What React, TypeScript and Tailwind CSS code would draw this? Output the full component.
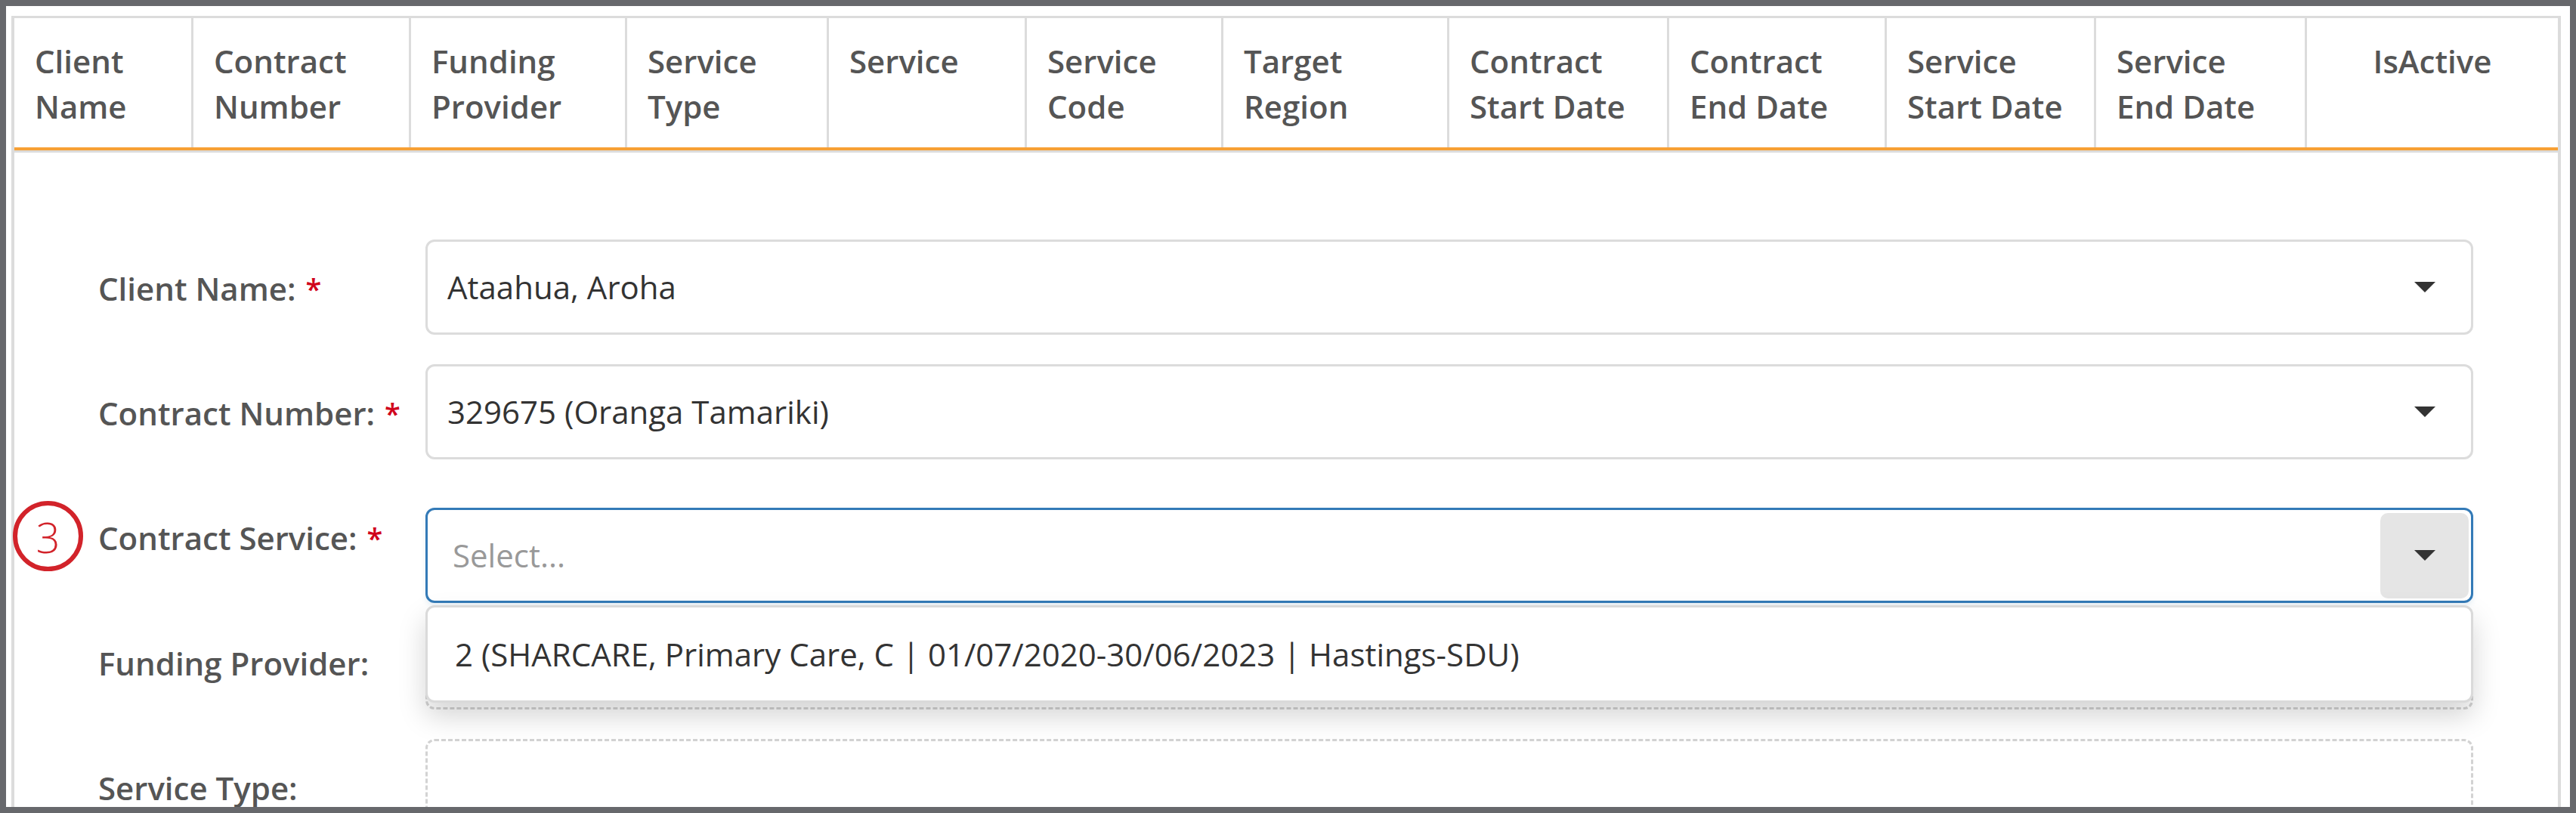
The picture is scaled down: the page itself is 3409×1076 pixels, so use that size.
const columns = [
  { label: ["Client", "Name"], width: "w-[237px]" },
  { label: ["Contract", "Number"], width: "w-[288px]" },
  { label: ["Funding", "Provider"], width: "w-[286px]" },
  { label: ["Service", "Type"], width: "w-[267px]" },
  { label: ["Service"], width: "w-[262px]" },
  { label: ["Service", "Code"], width: "w-[260px]" },
  { label: ["Target", "Region"], width: "w-[299px]" },
  { label: ["Contract", "Start Date"], width: "w-[291px]" },
  { label: ["Contract", "End Date"], width: "w-[288px]" },
  { label: ["Service", "Start Date"], width: "w-[277px]" },
  { label: ["Service", "End Date"], width: "w-[279px]" },
];

function Caret() {
  return (
    <span className="block w-0 h-0 border-l-[14px] border-r-[14px] border-t-[14px] border-l-transparent border-r-transparent border-t-[#333]" />
  );
}

function Label({ text, required }: { text: string; required?: boolean }) {
  return (
    <div className="w-[544px] shrink-0 pl-[111px] font-semibold text-[#555] whitespace-nowrap">
      {text}
      {required && <span className="text-[#d0021b] ml-[13px] text-[38px] align-top">*</span>}
    </div>
  );
}

function SelectBox({ value }: { value: string }) {
  return (
    <div className="w-[2710px] h-[126px] border-[3px] border-[#dcdcdc] rounded-[12px] flex items-center justify-between pl-[26px] pr-[3px]">
      <span className="text-[#333]">{value}</span>
      <div className="w-[117px] h-[113px] flex items-center justify-center">
        <Caret />
      </div>
    </div>
  );
}

export default function App() {
  return (
    <div className="w-[3409px] h-[1076px] bg-[#67686c] p-[8px] overflow-hidden font-['Open_Sans',sans-serif] text-[42px] leading-[60px]">
      <div className="h-full bg-white pt-[13px] pl-[7px] pr-[12px] overflow-hidden">
        <div className="h-full border-x-4 border-t-[3px] border-[#dcdcdc]">
          {/* table header */}
          <div className="flex border-b-4 border-[#f7a035]">
            {columns.map((col) => (
              <div
                key={col.label.join(" ")}
                className={`${col.width} shrink-0 border-r-[3px] border-[#dcdcdc] pl-[27px] pt-[27px] pb-[24px] h-[171px] font-semibold text-[#555]`}
              >
                {col.label.map((line) => (
                  <div key={line} className="whitespace-nowrap">{line}</div>
                ))}
              </div>
            ))}
            <div className="flex-1 pt-[27px] text-center font-semibold text-[#555]">IsActive</div>
          </div>
          <div className="h-[3px] bg-[#dcdcdc]" />

          {/* form */}
          <div className="flex flex-col">
            <div className="flex items-start mt-[115px]">
              <div className="mt-[35px]">
                <Label text="Client Name:" required />
              </div>
              <SelectBox value="Ataahua, Aroha" />
            </div>

            <div className="flex items-start mt-[39px]">
              <div className="mt-[35px]">
                <Label text="Contract Number:" required />
              </div>
              <SelectBox value="329675 (Oranga Tamariki)" />
            </div>

            <div className="relative z-10 flex items-start mt-[39px]">
              <div className="absolute left-[-2px] top-[16px] w-[93px] h-[93px] rounded-full border-[6px] border-[#d2232a] flex items-center justify-center text-[#d2232a] text-[56px] font-light leading-none">
                3
              </div>
              <div className="mt-[35px]">
                <Label text="Contract Service:" required />
              </div>
              <div className="relative mt-[25px]">
                <div className="w-[2710px] h-[126px] border-[3px] border-[#337ab7] rounded-[12px] flex items-center justify-between pl-[33px] pr-[3px] shadow-[0_3px_6px_rgba(51,122,183,0.12)]">
                  <span className="text-[#999]">Select...</span>
                  <div className="w-[117px] h-[113px] rounded-[10px] bg-[#e5e5e5] flex items-center justify-center">
                    <Caret />
                  </div>
                </div>
                <div className="absolute left-0 top-[129px] w-[2710px] h-[129px] bg-white border-[3px] border-[#dadada] rounded-[12px] shadow-[0_18px_36px_rgba(0,0,0,0.17)] flex items-center pl-[36px] text-[#333] whitespace-nowrap">
                  2 (SHARCARE, Primary Care, C | 01/07/2020-30/06/2023 | Hastings-SDU)
                </div>
              </div>
            </div>

            <div className="flex items-start mt-[15px]">
              <div className="mt-[35px]">
                <Label text="Funding Provider:" />
              </div>
              <div className="w-[2710px] h-[126px] border-[3px] border-dashed border-[#d3d3d3] rounded-[12px]" />
            </div>

            <div className="flex items-start mt-[39px]">
              <div className="mt-[35px]">
                <Label text="Service Type:" />
              </div>
              <div className="w-[2710px] h-[126px] border-[3px] border-dashed border-[#d3d3d3] rounded-[12px]" />
            </div>
          </div>
        </div>
      </div>
    </div>
  );
}
